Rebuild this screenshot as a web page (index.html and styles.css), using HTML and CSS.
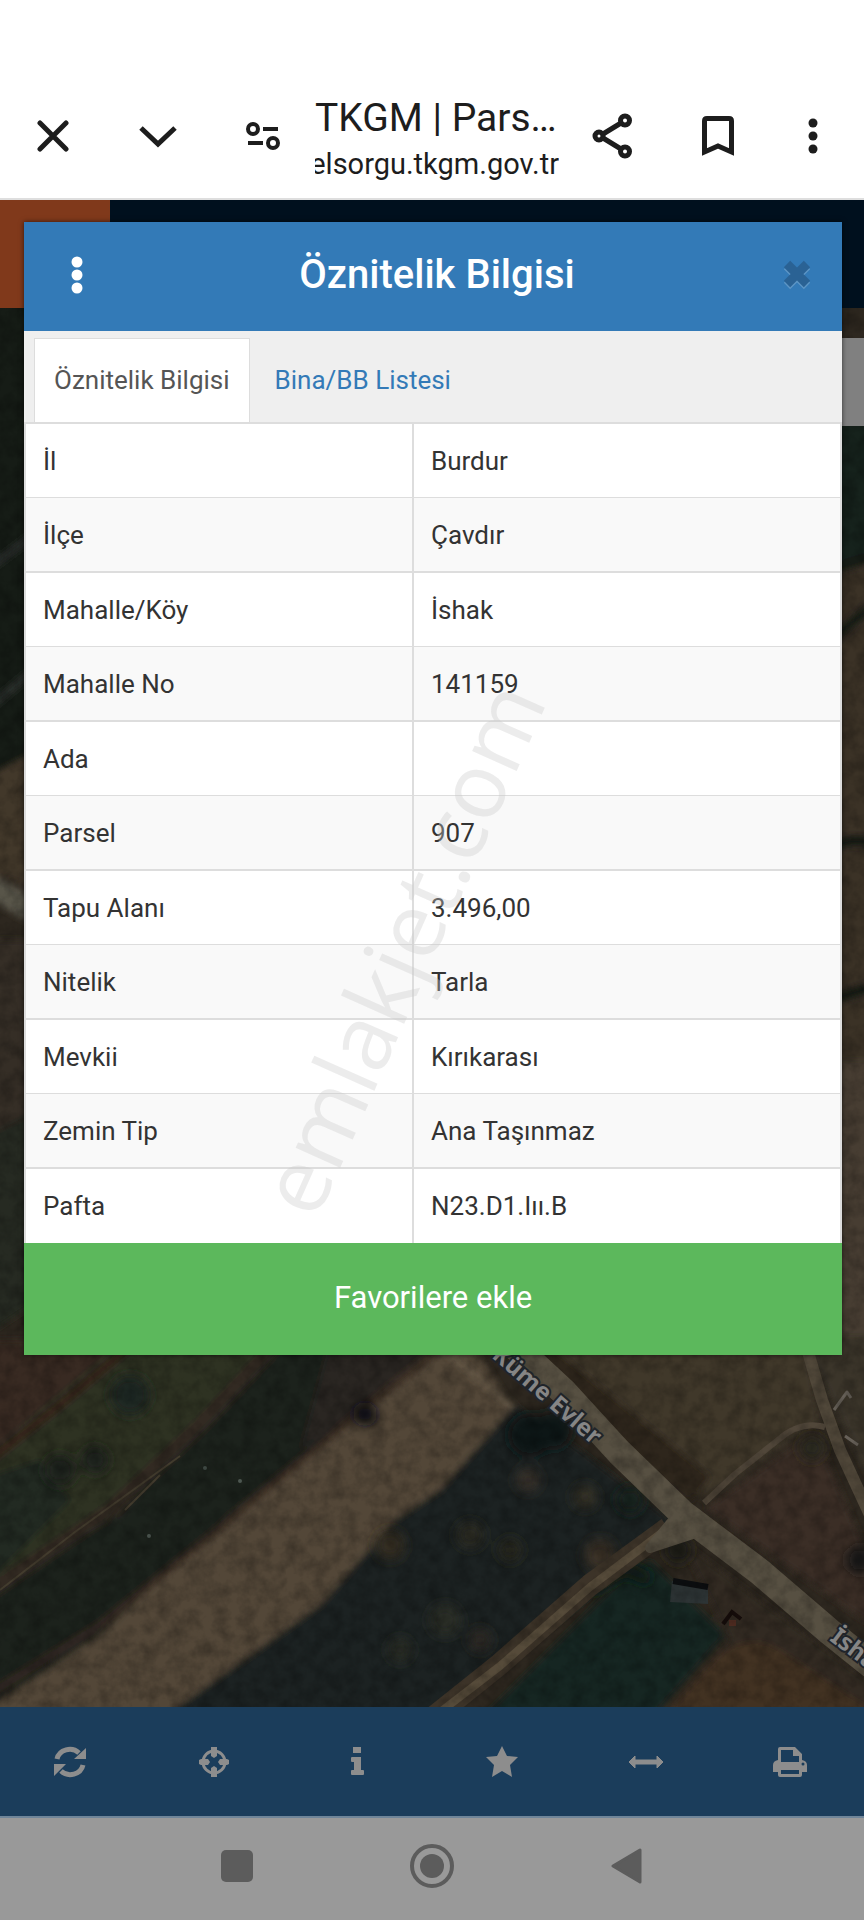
FILE: index.html
```
<!DOCTYPE html>
<html lang="tr">
<head>
<meta charset="utf-8">
<meta name="viewport" content="width=device-width, initial-scale=1">
<title>TKGM | Parsel Sorgu</title>
<link rel="stylesheet" href="styles.css">
</head>
<body>
<header class="browser-bar">
  <button class="bar-button" aria-label="Kapat"><svg width="32" height="32" viewBox="0 0 32 32"><path d="M3 3L29 29M29 3L3 29" class="line"/></svg></button>
  <button class="bar-button" aria-label="Küçült"><svg width="40" height="24" viewBox="0 0 40 24"><path d="M3 4L20 20L37 4" class="line miter"/></svg></button>
  <button class="bar-button" aria-label="Site ayarları"><svg width="34" height="30" viewBox="0 0 34 30"><g class="line thin"><circle cx="7" cy="8" r="5"/><path d="M17 8H32M2 22H17"/><circle cx="27" cy="22" r="5"/></g></svg></button>
  <div class="address">
    <div class="address-title">TKGM | Parsel Sorgulama</div>
    <div class="address-url"><span>parselsorgu.tkgm.gov.tr</span></div>
  </div>
  <button class="bar-button wide" aria-label="Paylaş"><svg width="40" height="46" viewBox="0 0 40 46"><g class="line"><circle cx="7" cy="23" r="4"/><circle cx="33" cy="7.500" r="4.500"/><circle cx="33" cy="38.500" r="4.500"/><path d="M11 21L29 10M11 25L29 36"/></g></svg></button>
  <button class="bar-button wide" aria-label="Yer imi"><svg width="32" height="40" viewBox="0 0 32 40"><path d="M2.500 36V5Q2.500 2.500 5 2.500H27Q29.500 2.500 29.500 5V36L16 30Z" class="line miter"/></svg></button>
  <button class="bar-button menu" aria-label="Menü"><svg width="10" height="38" viewBox="0 0 10 38"><circle cx="5" cy="6" r="4.500"/><circle cx="5" cy="19" r="4.500"/><circle cx="5" cy="32" r="4.500"/></svg></button>
</header>

<main class="page">
  <svg class="map" viewBox="0 200 864 1507" preserveAspectRatio="xMidYMax slice" aria-hidden="true">
    <defs>
      <filter id="soft" x="-5%" y="-5%" width="110%" height="110%"><feGaussianBlur stdDeviation="3"/></filter>
      <filter id="spots" x="-20%" y="-20%" width="140%" height="140%"><feGaussianBlur stdDeviation="6"/></filter>
      <filter id="grain" x="0" y="0" width="100%" height="100%">
        <feTurbulence type="fractalNoise" baseFrequency="0.07" numOctaves="4" seed="8"/>
        <feColorMatrix values="0 0 0 0 0  0 0 0 0 0  0 0 0 0 0  1.300 0 0 0 -0.450"/>
      </filter>
    </defs>
    <rect y="200" width="864" height="1507" fill="#2d271f"/>
    <g filter="url(#soft)">
      <path d="M-20 300H40V760L-20 780Z" fill="#121b19"/>
      <path d="M-20 575L40 530M-20 715L40 665" stroke="#2d332d" stroke-width="7"/>
      <path d="M-20 780L40 750V890L-20 870Z" fill="#42382a"/>
      <path d="M-20 880L40 915" stroke="#59544a" stroke-width="24"/>
      <path d="M-20 940H40V1150H-20Z" fill="#352e25"/>
      <path d="M-20 1140L40 1110V1300L-20 1340Z" fill="#252b20"/>
      <path d="M830 400H880V565H830Z" fill="#17201c"/>
      <path d="M830 560H880V1360H830Z" fill="#3b3128"/>
      <path d="M830 1060H880V1360H830Z" fill="#473d31"/>
      <path d="M830 850Q848 835 880 845M830 570L880 555M830 640L880 600M830 1000L880 985" stroke="#191a19" stroke-width="12" fill="none"/>
      <path d="M-20 1340H130L60 1410L-20 1470Z" fill="#372c24"/>
      <path d="M130 1335H280L180 1450L100 1530L-20 1600V1460Z" fill="#2e3024"/>
      <path d="M-20 1468L60 1405L135 1342" stroke="#34261e" stroke-width="9" fill="none"/>
      <path d="M-20 1480L40 1460L70 1500L-20 1590Z" fill="#232b22"/>
      <path d="M275 1335H440L390 1400L250 1510L100 1640L-20 1710V1595L120 1515Z" fill="#1b201e"/>
      <path d="M275 1345L200 1425L110 1510L-20 1598" stroke="#332b24" stroke-width="14" fill="none"/>
      <path d="M330 1340H450L370 1405L300 1450Z" fill="#292521"/>
      <path d="M445 1340L355 1412L230 1515L100 1635L-20 1715H165L330 1600L420 1515L520 1420L470 1340Z" fill="#534737"/>
      <path d="M440 1350L360 1412L230 1520L100 1625L-20 1700" stroke="#382b23" stroke-width="6" fill="none"/>
      <path d="M440 1345L515 1410" stroke="#665a48" stroke-width="6"/>
      <path d="M160 1720L320 1605L395 1520L440 1490L515 1405L580 1450L670 1520L610 1580L440 1720Z" fill="#1a2421"/>
      <path d="M480 1720L615 1585L650 1560L700 1610L725 1635L650 1720Z" fill="#182521"/>
      <path d="M540 1335H805L820 1420L705 1500L620 1430Z" fill="#40372b"/>
      <path d="M510 1335L700 1490" stroke="#2e261f" stroke-width="34"/>
      <path d="M705 1508L815 1430L870 1560V1625Z" fill="#3b2e25"/>
      <path d="M680 1540L880 1690V1720H660L730 1640Z" fill="#302921"/>
      <path d="M660 1720L700 1675Q740 1625 780 1650L880 1715Z" fill="#423124"/>
      <path d="M800 1335L880 1335V1500Z" fill="#3b352b"/>
    </g>
    <g filter="url(#spots)">
      <circle cx="95" cy="1460" r="14" fill="#1a211a"/><circle cx="130" cy="1395" r="20" fill="#1e2620"/><circle cx="60" cy="1470" r="16" fill="#1b241a"/>
      <circle cx="530" cy="1435" r="22" fill="#101817"/><circle cx="553" cy="1430" r="20" fill="#111816"/>
      <circle cx="528" cy="1480" r="12" fill="#37302a"/><circle cx="585" cy="1497" r="12" fill="#343225"/><circle cx="630" cy="1500" r="14" fill="#14211d"/>
      <circle cx="470" cy="1535" r="14" fill="#2a2a23"/><circle cx="510" cy="1550" r="12" fill="#28281f"/><circle cx="445" cy="1620" r="16" fill="#2c2d26"/><circle cx="390" cy="1545" r="15" fill="#342d22"/>
      <circle cx="400" cy="1650" r="12" fill="#2b2d26"/><circle cx="480" cy="1640" r="12" fill="#292821"/>
      <circle cx="600" cy="1555" r="16" fill="#3a3226"/><circle cx="860" cy="1560" r="14" fill="#171717"/><circle cx="812" cy="1448" r="13" fill="#25251d"/>
      <path d="M590 1590L625 1568L650 1580" stroke="#111a17" stroke-width="14" fill="none"/>
      <circle cx="365" cy="1414" r="12" fill="#0d1112"/><circle cx="365" cy="1414" r="9" fill="#0d1112"/><circle cx="678" cy="1550" r="14" fill="#1a1e18"/>
    </g>
    <g class="roads">
      <path d="M435 1716L500 1664L590 1585L668 1528" stroke="#3c3328" stroke-width="22"/>
      <path d="M435 1716L500 1666L590 1587L668 1528" stroke="#564b3a" stroke-width="8"/>
      <path d="M704 1503L735 1474L778 1440Q800 1420 825 1427" stroke="#51473a" stroke-width="6"/>
      <path d="M806 1345L822 1400L840 1450L870 1515" stroke="#51483a" stroke-width="12"/>
      <path d="M508 1340L565 1393L619 1452L682 1513L760 1572L830 1632L880 1672" stroke="#575042" stroke-width="27"/>
      <path d="M650 1548L680 1512L705 1530Z" stroke="#575042" stroke-width="10" fill="#575042"/>
      <path d="M834 1410L847 1392L851 1398M845 1436L858 1445" stroke="#666058" stroke-width="3"/>
    </g>
    <path d="M672 1581L708 1588V1604L670 1602Z" fill="#2d3435"/><path d="M673 1581L708 1587" stroke="#0c0e10" stroke-width="6"/><path d="M723 1624L732 1612L741 1619" stroke="#160d0b" stroke-width="4" fill="none"/><path d="M729 1620H736V1626H729Z" fill="#512d22"/>
    <circle cx="240" cy="1481" r="2" fill="#4d5751"/><circle cx="149" cy="1536" r="2" fill="#4d5751"/><circle cx="205" cy="1468" r="2" fill="#45504a"/>
    <path d="M0 1590L75 1532L180 1456M125 1510L160 1475" stroke="#433c2e" stroke-width="2" fill="none"/>
    <rect y="200" width="864" height="1507" filter="url(#grain)" opacity=".35"/>
    <g class="street">
      <text transform="translate(491 1357) rotate(41)">Küme Evler</text>
      <text transform="translate(829 1640) rotate(37)">İshak</text>
    </g>
  </svg>
  <div class="site-header"><div class="site-logo"></div></div>
  <div class="map-control"></div>

  <section class="dialog" role="dialog" aria-labelledby="dialog-title">
    <div class="dialog-header">
      <button class="dialog-button" aria-label="Seçenekler"><svg width="12" height="40" viewBox="0 0 12 40" fill="#fff"><circle cx="6" cy="7" r="5.500"/><circle cx="6" cy="20" r="5.500"/><circle cx="6" cy="33" r="5.500"/></svg></button>
      <h1 id="dialog-title">Öznitelik Bilgisi</h1>
      <button class="dialog-button close" aria-label="Kapat"><svg width="30" height="32" viewBox="0 0 30 32"><g fill="none" stroke-width="9"><path d="M5 7L25 27M25 7L5 27" stroke="#5c95c5"/><path d="M5 5L25 25M25 5L5 25" stroke="#2a6294"/></g></svg></button>
    </div>
    <nav class="tabs">
      <a class="tab active" href="#oznitelik">Öznitelik Bilgisi</a>
      <a class="tab" href="#bina">Bina/BB Listesi</a>
    </nav>
    <table class="details" id="oznitelik">
      <tbody>
        <tr><th scope="row">İl</th><td>Burdur</td></tr>
        <tr><th scope="row">İlçe</th><td>Çavdır</td></tr>
        <tr><th scope="row">Mahalle/Köy</th><td>İshak</td></tr>
        <tr><th scope="row">Mahalle No</th><td>141159</td></tr>
        <tr><th scope="row">Ada</th><td></td></tr>
        <tr><th scope="row">Parsel</th><td>907</td></tr>
        <tr><th scope="row">Tapu Alanı</th><td>3.496,00</td></tr>
        <tr><th scope="row">Nitelik</th><td>Tarla</td></tr>
        <tr><th scope="row">Mevkii</th><td>Kırıkarası</td></tr>
        <tr><th scope="row">Zemin Tip</th><td>Ana Taşınmaz</td></tr>
        <tr><th scope="row">Pafta</th><td>N23.D1.Iıı.B</td></tr>
      </tbody>
    </table>
    <button class="favorite">Favorilere ekle</button>
  </section>
  <div class="watermark">emlakjet.com</div>
</main>

<nav class="toolbar" aria-label="Harita araçları">
  <button class="tool" aria-label="Yenile"><svg width="32" height="32" viewBox="0 0 32 32"><path d="M3 13A13 12 0 0 1 25 7M29 19A13 12 0 0 1 7 25" fill="none" stroke="currentColor" stroke-width="5"/><path d="M32 2V13H20ZM0 30V18H12Z"/></svg></button>
  <button class="tool" aria-label="Konum"><svg width="32" height="32" viewBox="0 0 32 32"><circle cx="16" cy="16" r="11" fill="none" stroke="currentColor" stroke-width="3"/><path d="M13 1H19V10L16 12L13 10ZM13 31H19V22L16 20L13 22ZM1 14L3 13H10L12 16L10 19H3L1 18ZM31 14L29 13H22L20 16L22 19H29L31 18Z"/></svg></button>
  <button class="tool" aria-label="Bilgi"><svg width="32" height="32" viewBox="0 0 32 32"><path d="M11 1H19V7H11ZM10 11H19V24H21Q22 24 22 25V28Q22 29 21 29H10Q9 29 9 28V25Q9 24 10 24H12V16H10Q9 16 9 15V12Q9 11 10 11Z"/></svg></button>
  <button class="tool" aria-label="Favoriler"><svg width="32" height="32" viewBox="0 0 32 32"><path d="M16 0L21 10L32 11L24 19L26 31L16 25L6 31L8 19L0 11L11 10Z"/></svg></button>
  <button class="tool" aria-label="Ölç"><svg width="36" height="32" viewBox="0 0 36 32"><path d="M1 16L7 10V14H29V10L35 16L29 22V18H7V22Z" stroke="currentColor" stroke-linejoin="round"/></svg></button>
  <button class="tool" aria-label="Yazdır"><svg width="34" height="32" viewBox="0 0 34 32"><path fill-rule="evenodd" d="M5 3Q5 1 7 1H22L29 8V14Q34 15 34 19V26H29V29Q29 31 27 31H7Q5 31 5 29V26H0V19Q0 15 5 14ZM8 4V16H26V10H20V4ZM8 24V28H26V24Z"/><circle cx="30" cy="18" r="1.500" fill="#1b3d5b"/></svg></button>
</nav>

<footer class="system-nav">
  <button aria-label="Son uygulamalar"><svg width="32" height="44" viewBox="0 0 32 44"><rect y="6" width="32" height="32" rx="5"/></svg></button>
  <button aria-label="Ana ekran"><svg width="44" height="44" viewBox="0 0 44 44"><circle cx="22" cy="22" r="20" fill="none" stroke="currentColor" stroke-width="4"/><circle cx="22" cy="22" r="12"/></svg></button>
  <button aria-label="Geri"><svg width="32" height="44" viewBox="0 0 32 44"><path d="M2 22L29 6V38Z" stroke="currentColor" stroke-width="3" stroke-linejoin="round"/></svg></button>
</footer>
</body>
</html>
```
FILE: styles.css
```
* { box-sizing: border-box; }

body {
  margin: 0;
  min-height: 100vh;
  display: flex;
  flex-direction: column;
  font-family: Roboto, "Noto Sans", sans-serif;
  font-size: 26px;
  color: #333;
  background: #fff;
}

button {
  margin: 0;
  padding: 0;
  border: 0;
  background: none;
  color: inherit;
  font: inherit;
}

svg { display: block; fill: currentColor; }

.browser-bar {
  display: flex;
  height: 200px;
  padding: 74px 9px 0 0;
  border-bottom: 2px solid #dedede;
  color: #1d1d1d;
}

.bar-button {
  flex: none;
  width: 105px;
  display: flex;
  align-items: center;
  justify-content: center;
}

.bar-button.wide { width: 106px; }
.bar-button.menu { width: 84px; }

.line {
  fill: none;
  stroke: currentColor;
  stroke-width: 5;
  stroke-linecap: round;
}

.thin { stroke-width: 4; stroke-linecap: butt; }
.miter { stroke-linecap: butt; stroke-width: 5; }

.address {
  flex: 1;
  min-width: 0;
  padding-top: 18px;
}

.address-title {
  overflow: hidden;
  white-space: nowrap;
  text-overflow: ellipsis;
  font-size: 39px;
  line-height: 52px;
}

.address-url {
  display: flex;
  justify-content: flex-end;
  overflow: hidden;
  white-space: nowrap;
  font-size: 29px;
  line-height: 40px;
}

.page {
  position: relative;
  flex: 1;
  overflow: hidden;
  padding: 22px 22px 352px 24px;
  background: #2d271f;
}

.map {
  position: absolute;
  inset: 0;
  width: 100%;
  height: 100%;
}

.roads { fill: none; stroke-linejoin: round; }

.street {
  font-family: "Noto Sans", sans-serif;
  font-size: 24px;
  font-weight: 700;
  fill: #858585;
  stroke: #20242a;
  stroke-width: 4px;
  paint-order: stroke;
}

.site-header {
  position: absolute;
  inset: 0 0 auto 0;
  height: 108px;
  background: #00101e;
}

.site-logo {
  width: 110px;
  height: 100%;
  background: #80391b;
}

.map-control {
  position: absolute;
  top: 138px;
  right: 0;
  width: 90px;
  height: 88px;
  background: #808080;
}

.dialog {
  position: relative;
  background: #fff;
  box-shadow: 0 0 5px rgba(0, 0, 0, 0.6);
}

.dialog-header {
  display: flex;
  align-items: center;
  height: 109px;
  padding: 0 8px 4px 16px;
  background: #337ab7;
  color: #fff;
}

.dialog-header h1 {
  flex: 1;
  margin: 0;
  font-size: 40px;
  font-weight: 500;
  line-height: 52px;
  text-align: center;
}

.dialog-button {
  width: 74px;
  height: 74px;
  display: flex;
  align-items: center;
  justify-content: center;
}

.tabs {
  display: flex;
  height: 91px;
  padding: 7px 10px 0;
  background: #efefef;
}

.tab {
  padding: 0 19px;
  border: 1px solid transparent;
  color: #337ab7;
  line-height: 82px;
  text-decoration: none;
}

.tab + .tab { margin-left: 5px; }

.tab.active {
  border-color: #ddd;
  border-bottom: 0;
  background: #fff;
  color: #555;
}

.details {
  width: 100%;
  border: 2px solid #ddd;
  border-bottom: 0;
  border-spacing: 0;
  table-layout: fixed;
}

.details th,
.details td {
  height: 74px;
  padding: 0 17px;
  border-bottom: 1px solid #ddd;
  font-weight: 400;
  line-height: 36px;
  text-align: left;
}

.details th { width: 388px; border-right: 2px solid #ddd; }

.details tr:nth-child(even) > * {
  height: 75px;
  border-bottom-width: 2px;
  background: #f9f9f9;
}

.details tr:last-child > * { border-bottom: 0; }

.favorite {
  display: block;
  width: 100%;
  height: 112px;
  padding-bottom: 4px;
  background: #5cb85c;
  color: #fff;
  font-size: 31px;
}

.watermark {
  position: absolute;
  top: 747px;
  left: 400px;
  font-family: "Open Sans", sans-serif;
  font-size: 91px;
  line-height: 100px;
  color: rgba(200, 200, 200, 0.35);
  transform: translate(-50%, -50%) rotate(-66deg);
}

.toolbar {
  display: grid;
  grid-template-columns: repeat(6, 1fr);
  height: 111px;
  border-bottom: 2px solid #6f8599;
  background: #1b3d5b;
  color: #8d8d8d;
}

.tool {
  display: flex;
  align-items: center;
  justify-content: center;
  padding-right: 4px;
}

.system-nav {
  display: flex;
  align-items: center;
  justify-content: center;
  gap: 157px;
  height: 102px;
  padding-bottom: 6px;
  background: #999;
  color: #5c5c5c;
}
```
